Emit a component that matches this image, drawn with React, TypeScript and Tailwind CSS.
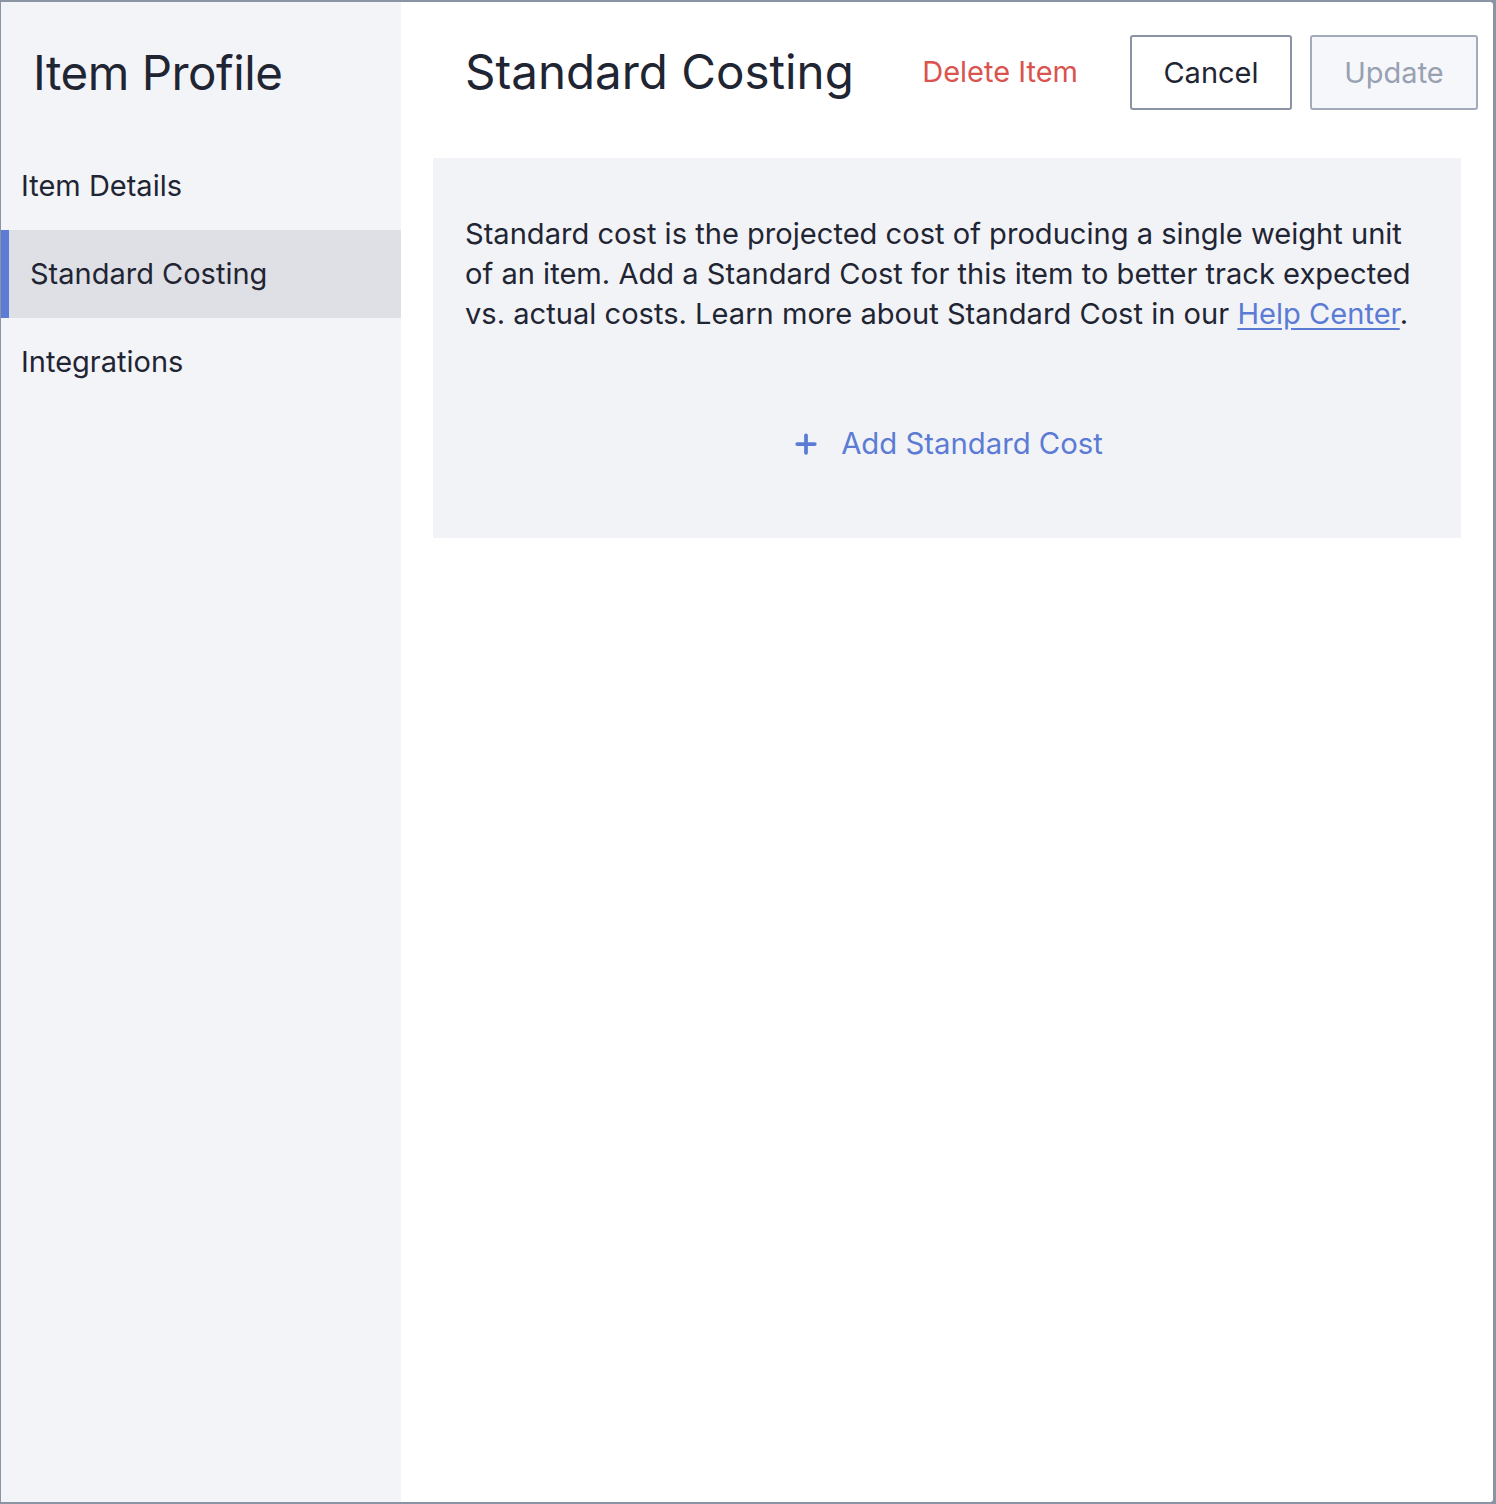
import { Plus } from 'lucide-react';

const navItems = ['Item Details', 'Standard Costing', 'Integrations'];

export default function App() {
  const active = 'Standard Costing';

  return (
    <div className="h-[1504px] w-[1496px] bg-[#8b94a5] pb-[2px] pl-[1px] pr-[3px] pt-[2px] font-['Inter',sans-serif] text-[#1f2533]">
      <div className="flex h-full overflow-hidden rounded-r-[3px] bg-white">
        <aside className="w-[400px] shrink-0 bg-[#f3f4f8]">
          <h1 className="whitespace-nowrap pl-[32px] pt-[38px] text-[47.5px] leading-[66px] tracking-[-0.5px]">Item Profile</h1>
          <nav className="mt-[36px]">
            {navItems.map((item) =>
              item === active ? (
                <div key={item} className="flex h-[88px] items-center border-l-[8px] border-[#5b7bd5] bg-[#dfe0e5] pl-[21px] text-[29px]">
                  {item}
                </div>
              ) : (
                <div key={item} className="flex h-[88px] items-center pl-[20px] text-[29px]">
                  {item}
                </div>
              )
            )}
          </nav>
        </aside>

        <main className="flex-1 pl-[32px] pr-[15px]">
          <header className="flex h-[140px] items-start pt-[33px]">
            <h2 className="whitespace-nowrap pl-[32px] pt-[4px] text-[47.5px] leading-[66px]">Standard Costing</h2>
            <button className="ml-auto mt-[17px] whitespace-nowrap text-[29px] leading-[40px] text-[#d9544f]">Delete Item</button>
            <button className="ml-[52px] h-[75px] w-[162px] rounded-[3px] border-2 border-[#8b94a5] bg-white text-[29px]">Cancel</button>
            <button className="ml-[18px] h-[75px] w-[168px] rounded-[3px] border-2 border-[#a3abba] bg-[#f6f7fa] text-[29px] text-[#98a1b2]">Update</button>
          </header>

          <section className="mr-[17px] mt-[16px] h-[380px] bg-[#f2f3f7] px-[32px] pt-[56px]">
            <p className="text-[29.1px] leading-[40px]">
              Standard cost is the projected cost of producing a single weight unit of an item. Add a Standard Cost for this item to better track expected vs. actual costs. Learn more about Standard Cost in our{' '}
              <a className="text-[#5b7bd5] underline underline-offset-[4px]" href="#">Help Center</a>.
            </p>
            <button className="mx-auto mt-[90px] flex items-center gap-[20px] text-[29.3px] leading-[40px] text-[#5b7bd5]">
              <Plus className="h-[30px] w-[30px]" strokeWidth={3} />
              Add Standard Cost
            </button>
          </section>
        </main>
      </div>
    </div>
  );
}
